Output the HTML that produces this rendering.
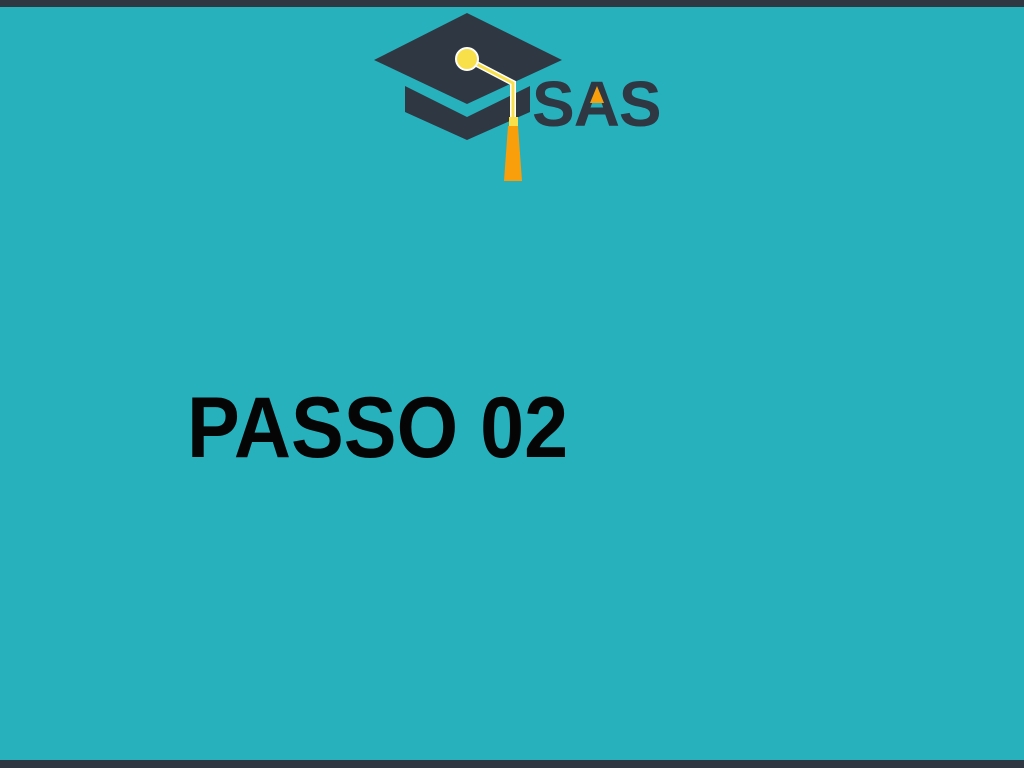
<!DOCTYPE html>
<html><head><meta charset="utf-8"><style>
html,body{margin:0;padding:0}
body{width:1024px;height:768px;background:#27b1bd;position:relative;overflow:hidden;font-family:"Liberation Sans",sans-serif}
.bar{position:absolute;left:0;width:1024px;background:#2e3742}
.t{position:absolute;left:187px;top:378px;font-size:86px;font-weight:bold;color:#050505;line-height:100px;transform:scaleX(0.92);transform-origin:left top;white-space:nowrap}
.sas{position:absolute;left:532px;top:64px;font-size:64px;font-weight:bold;color:#2e3742;line-height:80px;letter-spacing:-1px}
</style></head><body>
<div class="bar" style="top:0;height:7px"></div>
<div class="bar" style="top:760px;height:8px"></div>
<svg style="position:absolute;left:0;top:0" width="1024" height="200">
<path d="M405 86 L467 117 L530 86 L530 112 L467 140 L405 112 Z" fill="#2e3742"/>
<path d="M374 60 L467 13 L562 60 L467 104 Z" fill="#2e3742"/>
<path d="M467 59 L513 83 L513 122" stroke="#ffffff" stroke-width="6" fill="none"/>
<path d="M467 59 L513 83 L513 122" stroke="#f7e04a" stroke-width="3" fill="none"/>
<circle cx="467" cy="59" r="11" fill="#f7e04a" stroke="#fff" stroke-width="2"/>
<rect x="509" y="117" width="9" height="9" fill="#f7e04a"/>
<path d="M508 126 L518 126 L522 181 L504 181 Z" fill="#f99f0c"/>
</svg>
<div class="sas">SAS</div>
<svg style="position:absolute;left:0;top:0" width="1024" height="200">
<path d="M590 103 L604 103 L597 86 Z" fill="#f99f0c"/>
</svg>
<div class="t">PASSO 02</div>
</body></html>
